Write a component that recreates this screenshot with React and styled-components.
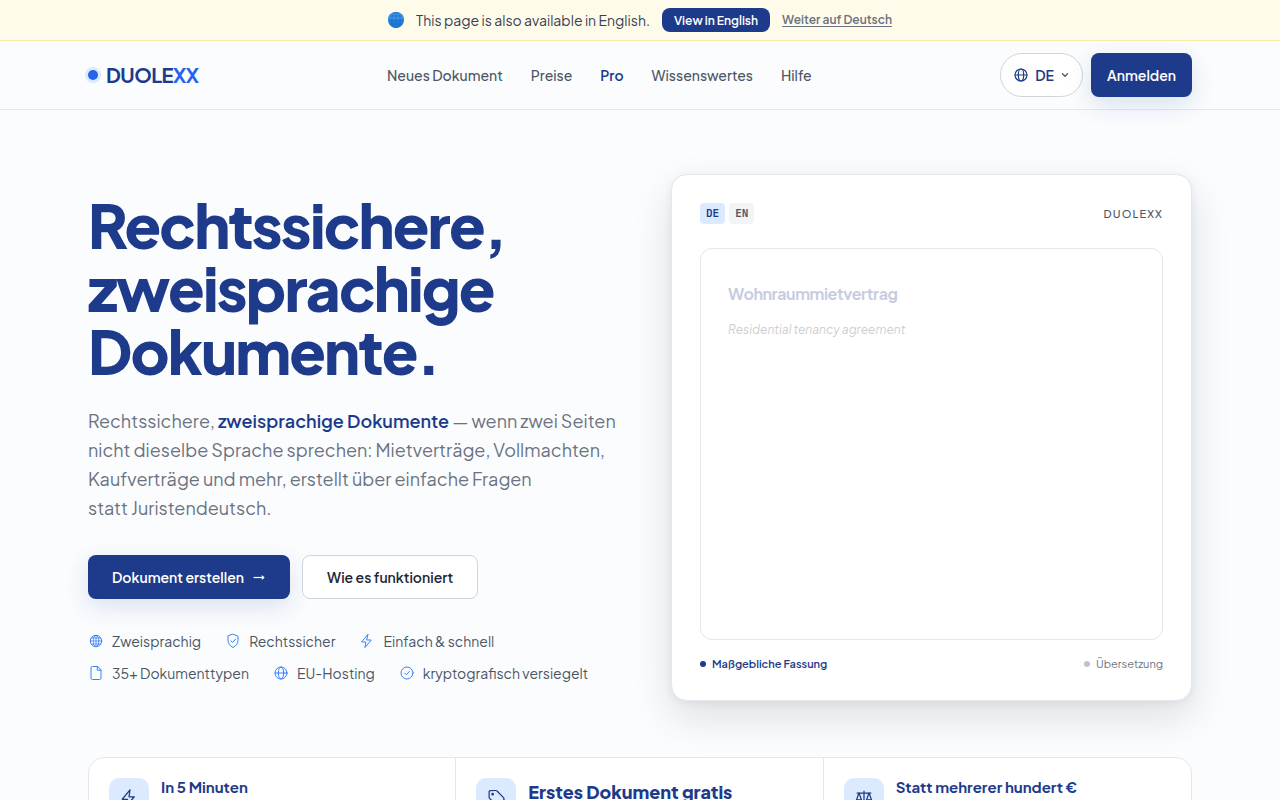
import React from "react";
import styled, { createGlobalStyle } from "styled-components";
import { ChevronDown } from "lucide-react";

const Icon = ({ size = 16, children, ...rest }) => (
    <svg
        width={size}
        height={size}
        viewBox="0 0 16 16"
        fill="none"
        stroke="currentColor"
        strokeLinecap="round"
        strokeLinejoin="round"
        aria-hidden="true"
        {...rest}
    >
        {children}
    </svg>
);

const GlobeIcon = (props) => (
    <Icon {...props}>
        <circle cx="8" cy="8" r="6" />
        <ellipse cx="8" cy="8" rx="2.7" ry="6" />
        <path d="M2 8h12" />
    </Icon>
);

const GridGlobeIcon = (props) => (
    <Icon {...props}>
        <circle cx="8" cy="8" r="5.7" />
        <ellipse cx="8" cy="8" rx="2.8" ry="5.7" strokeWidth="0.8" />
        <path d="M8 2.3v11.4M2.3 8h11.4M3.3 5h9.4M3.3 11h9.4" strokeWidth="0.8" />
    </Icon>
);

const ShieldIcon = (props) => (
    <Icon {...props}>
        <path d="M8 1.3 13 3.2v4c0 3.3-2.1 5.8-5 7.3-2.9-1.5-5-4-5-7.3v-4z" />
        <path d="m5.900 7.8 1.6 1.6 3-3.2" />
    </Icon>
);

const ZapIcon = (props) => (
    <Icon {...props}>
        <path d="M8.8 1.5 2.6 9h4.2l-.9 5.6L12.2 7H8z" />
    </Icon>
);

const FileIcon = (props) => (
    <Icon {...props}>
        <path d="M9.3 1.5H4.5A1.5 1.5 0 0 0 3 3v10a1.5 1.5 0 0 0 1.5 1.5h7A1.5 1.5 0 0 0 13 13V5.2z" />
        <path d="M9.3 1.5v3.7H13" />
    </Icon>
);

const CheckIcon = (props) => (
    <Icon {...props}>
        <circle cx="8" cy="8" r="6" />
        <path d="m5.7 8.2 1.6 1.6 3-3.3" />
    </Icon>
);

const TagIcon = (props) => (
    <Icon {...props}>
        <path d="M2.5 3v4.3c0 .4.2.8.4 1l5.3 5.2c.6.6 1.5.6 2 0l3.8-3.8c.6-.6.6-1.4 0-2L8.8 2.4a1.5 1.5 0 0 0-1-.4H3.5a1 1 0 0 0-1 1z" />
        <circle cx="5.3" cy="4.9" r="0.6" />
    </Icon>
);

const ScalesIcon = (props) => (
    <Icon {...props}>
        <path d="M8 2.5v11.5M2.5 4h11M5.5 14h5" />
        <path d="M4 4 2 9.5h4zM12 4l-2 5.5h4z" />
    </Icon>
);

const ArrowIcon = () => (
    <svg width="14" height="14" viewBox="0 0 14 14" fill="none" stroke="currentColor" strokeWidth="1.2" aria-hidden="true">
        <path d="M1.5 7.5h10" />
        <path d="M9.8 5 12.6 7.5 9.800 10z" fill="currentColor" stroke="none" />
    </svg>
);

const BlueGlobe = () => (
    <svg width="16" height="16" viewBox="0 0 16 16" fill="none" aria-hidden="true">
        <circle cx="8" cy="8" r="8" fill="#1f7fdb" />
        <path d="M0 8a8 8 0 0 1 16 0z" fill="#3b93ea" />
        <path d="M8 0v16M0 8h16M1.5 4h13M1.5 12h13" stroke="#1567bd" strokeWidth="0.6" />
        <ellipse cx="8" cy="8" rx="4.2" ry="8" stroke="#1567bd" strokeWidth="0.6" />
    </svg>
);

const navLinks = [
    { label: "Neues Dokument" },
    { label: "Preise" },
    { label: "Pro", active: true },
    { label: "Wissenswertes" },
    { label: "Hilfe" },
];

const trustItems = [
    { label: "Zweisprachig", ItemIcon: GridGlobeIcon },
    { label: "Rechtssicher", ItemIcon: ShieldIcon },
    { label: "Einfach & schnell", ItemIcon: ZapIcon },
    { label: "35+ Dokumenttypen", ItemIcon: FileIcon },
    { label: "EU-Hosting", ItemIcon: GlobeIcon },
    { label: "kryptografisch versiegelt", ItemIcon: CheckIcon },
];

const features = [
    { title: "In 5 Minuten", ItemIcon: ZapIcon },
    { title: "Erstes Dokument gratis", ItemIcon: TagIcon, large: true },
    { title: "Statt mehrerer hundert €", ItemIcon: ScalesIcon },
];

const App = () => {
    return (
        <>
            <GlobalStyle />
            <LanguageBar>
                <BlueGlobe />
                <span>This page is also available in English.</span>
                <EnglishButton type="button">View in English</EnglishButton>
                <StayLink href="#de">Weiter auf Deutsch</StayLink>
            </LanguageBar>

            <Header>
                <HeaderInner>
                    <Logo href="#home">
                        <LogoDot />
                        <span>DUOLE<em>XX</em></span>
                    </Logo>
                    <Nav>
                        {navLinks.map(({ label, active }) => (
                            <NavLink key={label} href="#nav" $active={active}>{label}</NavLink>
                        ))}
                    </Nav>
                    <HeaderActions>
                        <LanguageButton type="button">
                            <GlobeIcon strokeWidth="1.2" />
                            DE
                            <ChevronDown size={10} strokeWidth={3} color="#4b5563" />
                        </LanguageButton>
                        <LoginButton type="button">Anmelden</LoginButton>
                    </HeaderActions>
                </HeaderInner>
            </Header>

            <main>
                <Hero>
                    <div>
                        <Title>Rechtssichere, zweisprachige Dokumente.</Title>
                        <Lead>
                            Rechtssichere, <strong>zweisprachige Dokumente</strong> — wenn zwei Seiten
                            nicht dieselbe Sprache sprechen: Mietverträge, Vollmachten,
                            Kaufverträge und mehr, erstellt über einfache Fragen
                            statt&nbsp;Juristendeutsch.
                        </Lead>
                        <Actions>
                            <PrimaryButton type="button">
                                Dokument erstellen <ArrowIcon />
                            </PrimaryButton>
                            <SecondaryButton type="button">Wie es funktioniert</SecondaryButton>
                        </Actions>
                        <TrustList>
                            {trustItems.map(({ label, ItemIcon }) => (
                                <TrustItem key={label}><ItemIcon />{label}</TrustItem>
                            ))}
                        </TrustList>
                    </div>

                    <DocCard>
                        <CardRow>
                            <Tags>
                                <Tag $active>DE</Tag>
                                <Tag>EN</Tag>
                            </Tags>
                            <CardBrand>DUOLEXX</CardBrand>
                        </CardRow>
                        <Sheet>
                            <SheetTitle>Wohnraummietvertrag</SheetTitle>
                            <SheetSubtitle>Residential tenancy agreement</SheetSubtitle>
                        </Sheet>
                        <CardRow>
                            <Legend $primary>Maßgebliche Fassung</Legend>
                            <Legend>Übersetzung</Legend>
                        </CardRow>
                    </DocCard>
                </Hero>

                <Features>
                    {features.map(({ title, ItemIcon, large }) => (
                        <Feature key={title}>
                            <FeatureIcon><ItemIcon size={20} /></FeatureIcon>
                            <FeatureTitle $large={large}>{title}</FeatureTitle>
                        </Feature>
                    ))}
                </Features>
            </main>
        </>
    );
};

export default App;

const GlobalStyle = createGlobalStyle`
  * {
    box-sizing: border-box;
  }

  body {
    margin: 0;
    background: #fafcfe;
    color: #4b5563;
    font-family: "Plus Jakarta Sans", Inter, "Liberation Sans", sans-serif;
  }

  button {
    font-family: inherit;
    cursor: pointer;
  }

  a {
    color: inherit;
  }

  svg {
    flex-shrink: 0;
  }
`;

const LanguageBar = styled.div`
  display: flex;
  align-items: center;
  justify-content: center;
  gap: 12px;
  padding: 8px 16px;
  background: #fffbeb;
  border-bottom: 1px solid #fde9a9;
  color: #374151;
  font-size: 14px;
  line-height: 24px;
`;

const EnglishButton = styled.button`
  height: 24px;
  padding: 0 12px;
  border: none;
  border-radius: 8px;
  background: #1e3a8a;
  color: #fff;
  font-size: 12px;
  font-weight: 600;
`;

const StayLink = styled.a`
  color: #6b7280;
  font-size: 12px;
  font-weight: 600;
  text-underline-offset: 2px;
`;

const Header = styled.header`
  border-bottom: 1px solid #e5e7eb;
`;

const HeaderInner = styled.div`
  display: flex;
  align-items: center;
  justify-content: space-between;
  max-width: 1200px;
  margin: 0 auto;
  padding: 12px 48px;
`;

const Logo = styled.a`
  display: flex;
  align-items: center;
  gap: 8px;
  color: #1e3a8a;
  font-size: 20px;
  font-weight: 700;
  letter-spacing: -0.025em;
  line-height: 24px;
  text-decoration: none;

  em {
    color: #2563eb;
    font-style: normal;
  }
`;

const LogoDot = styled.span`
  width: 10px;
  height: 10px;
  border-radius: 50%;
  background: #2563eb;
  box-shadow: 0 0 0 3px #dbeafe;
`;

const Nav = styled.nav`
  display: flex;
  gap: 28px;
`;

const NavLink = styled.a`
  color: ${({ $active }) => ($active ? "#1e3a8a" : "#4b5563")};
  font-size: 14px;
  font-weight: ${({ $active }) => ($active ? 600 : 500)};
  text-decoration: none;
`;

const HeaderActions = styled.div`
  display: flex;
  gap: 8px;
`;

const LanguageButton = styled.button`
  display: flex;
  align-items: center;
  gap: 6px;
  height: 44px;
  padding: 0 12px;
  border: 1px solid #d1d5db;
  border-radius: 22px;
  background: #fff;
  color: #1e3a8a;
  font-size: 14px;
  font-weight: 600;
`;

const LoginButton = styled.button`
  height: 44px;
  padding: 0 16px;
  border: none;
  border-radius: 8px;
  background: #1e3a8a;
  box-shadow: 0 8px 24px rgba(30, 58, 138, .14);
  color: #fff;
  font-size: 14px;
  font-weight: 600;
`;

const Hero = styled.section`
  display: grid;
  grid-template-columns: minmax(0, 1fr) minmax(0, 521px);
  align-items: center;
  gap: 48px;
  max-width: 1200px;
  margin: 0 auto;
  padding: 64px 48px 56px;

  @media (max-width: 900px) {
    grid-template-columns: minmax(0, 1fr);
  }
`;

const Title = styled.h1`
  max-width: 480px;
  margin: 0 0 24px;
  color: #1e3a8a;
  font-size: 60px;
  font-weight: 800;
  line-height: 63px;
  letter-spacing: -0.03em;
`;

const Lead = styled.p`
  margin: 0 0 33px;
  color: #6b7280;
  font-size: 18px;
  line-height: 29px;

  strong {
    color: #1e3a8a;
    font-weight: 600;
  }
`;

const Actions = styled.div`
  display: flex;
  gap: 12px;
  margin-bottom: 32px;
`;

const PrimaryButton = styled(LoginButton)`
  display: flex;
  align-items: center;
  gap: 8px;
  padding: 0 24px;
`;

const SecondaryButton = styled.button`
  height: 44px;
  padding: 0 24px;
  border: 1px solid #d1d5db;
  border-radius: 8px;
  background: #fff;
  color: #1f2937;
  font-size: 14px;
  font-weight: 600;
`;

const TrustList = styled.ul`
  display: flex;
  flex-wrap: wrap;
  gap: 12px 24px;
  margin: 0;
  padding: 0;
  list-style: none;
`;

const TrustItem = styled.li`
  display: flex;
  align-items: center;
  gap: 8px;
  font-size: 14px;
  line-height: 20px;

  svg {
    color: #3b82f6;
  }
`;

const DocCard = styled.article`
  display: flex;
  flex-direction: column;
  padding: 28px;
  border: 1px solid #e5e7eb;
  border-radius: 16px;
  background: #fff;
  box-shadow: 0 16px 40px rgba(15, 23, 42, .12), 0 2px 8px rgba(15, 23, 42, .06);
`;

const CardRow = styled.div`
  display: flex;
  align-items: center;
  justify-content: space-between;
`;

const Tags = styled.div`
  display: flex;
  gap: 4px;
`;

const Tag = styled.span`
  padding: 0 6px;
  border-radius: 4px;
  background: ${({ $active }) => ($active ? "#dbeafe" : "#f3f4f6")};
  color: ${({ $active }) => ($active ? "#1e3a8a" : "#4b5563")};
  font-family: "JetBrains Mono", "Liberation Mono", monospace;
  font-size: 11px;
  font-weight: 600;
  line-height: 21px;
`;

const CardBrand = styled.span`
  font-size: 11px;
  font-weight: 500;
  letter-spacing: 0.1em;
  line-height: 20px;
`;

const Sheet = styled.div`
  min-height: 392px;
  margin: 24px 0 16px;
  padding: 34px 27px;
  border: 1px solid #e5e7eb;
  border-radius: 12px;
`;

const SheetTitle = styled.h2`
  margin: 0 0 16px;
  color: #1e3a8a;
  font-size: 16px;
  font-weight: 700;
  letter-spacing: -0.025em;
  line-height: 22px;
  opacity: .25;
`;

const SheetSubtitle = styled.p`
  margin: 0;
  color: #6b7280;
  font-size: 12px;
  font-style: italic;
  line-height: 18px;
  opacity: .35;
`;

const Legend = styled.span`
  display: flex;
  align-items: center;
  gap: 6px;
  color: ${({ $primary }) => ($primary ? "#1e3a8a" : "#6b7280")};
  font-size: 11px;
  font-weight: ${({ $primary }) => ($primary ? 600 : 400)};
  line-height: 16px;

  &::before {
    content: "";
    width: 6px;
    height: 6px;
    border-radius: 50%;
    background: ${({ $primary }) => ($primary ? "#1e3a8a" : "#c0c4ca")};
  }
`;

const Features = styled.section`
  display: grid;
  grid-template-columns: repeat(3, minmax(0, 1fr));
  width: calc(100% - 96px);
  max-width: 1104px;
  margin: 0 auto 56px;
  border: 1px solid #e5e7eb;
  border-radius: 16px;
  background: #fff;
`;

const Feature = styled.div`
  display: flex;
  gap: 12px;
  padding: 20px;

  &:not(:last-child) {
    border-right: 1px solid #e5e7eb;
  }
`;

const FeatureIcon = styled.span`
  display: flex;
  align-items: center;
  justify-content: center;
  width: 40px;
  height: 40px;
  border-radius: 10px;
  background: #dbeafe;
  color: #1e3a8a;
`;

const FeatureTitle = styled.h3`
  margin: 0;
  color: #1e3a8a;
  font-size: ${({ $large }) => ($large ? "18px" : "15px")};
  font-weight: ${({ $large }) => ($large ? 800 : 700)};
  line-height: ${({ $large }) => ($large ? "28px" : "18px")};
`;
